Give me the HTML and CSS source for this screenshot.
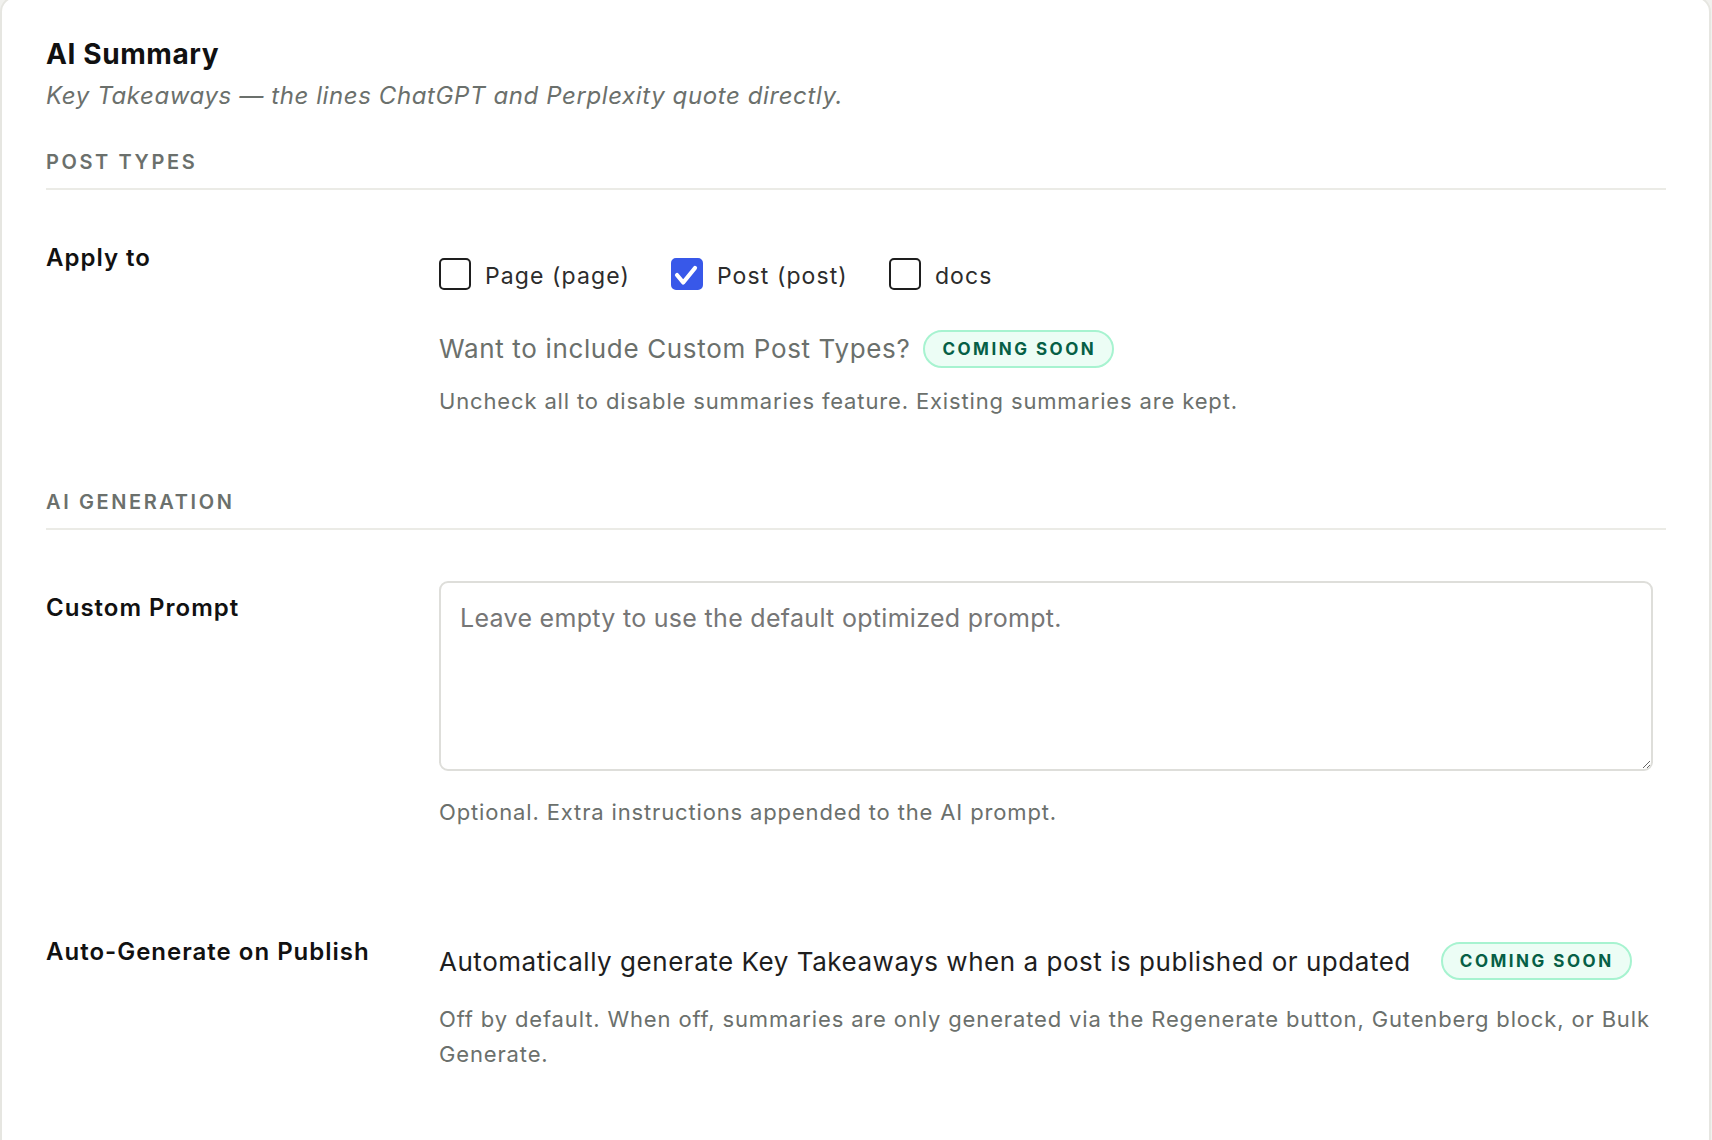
FILE: index.html
```html
<!DOCTYPE html>
<html lang="en">
<head>
<meta charset="utf-8">
<title>AI Summary</title>
<link rel="stylesheet" href="styles.css">
</head>
<body>
<div class="card">
  <h2 class="title">AI Summary</h2>
  <p class="subtitle">Key Takeaways — the lines ChatGPT and Perplexity quote directly.</p>

  <div class="section first">Post Types</div>

  <div class="row row-apply">
    <div class="label">Apply to</div>
    <div class="control">
      <div class="options">
        <label class="opt"><span class="cb"></span><span class="opt-text">Page (page)</span></label>
        <label class="opt"><span class="cb checked"><svg viewBox="0 0 32 32" width="32" height="32"><path d="M7 17 L13.2 24.5 L25 10" fill="none" stroke="#fff" stroke-width="4.2" stroke-linecap="round" stroke-linejoin="round"/></svg></span><span class="opt-text">Post (post)</span></label>
        <label class="opt"><span class="cb"></span><span class="opt-text">docs</span></label>
      </div>
      <div class="cpt">
        <span class="cpt-text">Want to include Custom Post Types?</span>
        <span class="badge">Coming soon</span>
      </div>
      <p class="hint hint-apply">Uncheck all to disable summaries feature. Existing summaries are kept.</p>
    </div>
  </div>

  <div class="section second">AI Generation</div>

  <div class="row row-prompt">
    <div class="label">Custom Prompt</div>
    <div class="control">
      <textarea class="prompt" placeholder="Leave empty to use the default optimized prompt."></textarea>
      <p class="hint hint-prompt">Optional. Extra instructions appended to the AI prompt.</p>
    </div>
  </div>

  <div class="row row-auto">
    <div class="label">Auto-Generate on Publish</div>
    <div class="control">
      <div class="auto">
        <span class="auto-text">Automatically generate Key Takeaways when a post is published or updated</span>
        <span class="badge badge-wide">Coming soon</span>
      </div>
      <p class="hint hint-auto">Off by default. When off, summaries are only generated via the Regenerate button, Gutenberg block, or Bulk Generate.</p>
    </div>
  </div>
</div>
</body>
</html>
```

FILE: styles.css
```css
* { box-sizing: border-box; }

html, body {
  margin: 0;
  padding: 0;
  height: 100%;
  overflow: hidden;
}

body {
  background: #f1f1ee;
  font-family: Inter, "Noto Sans", "Liberation Sans", sans-serif;
  color: #1e1e1e;
}

.card {
  margin: -4px 1px 0 0;
  min-height: 1220px;
  background: #ffffff;
  border: 2px solid #e6e6e1;
  border-radius: 16px;
  padding: 41px 43px 60px 44px;
}

.title {
  margin: 0;
  font-size: 28px;
  line-height: 30px;
  font-weight: 700;
  letter-spacing: 0.6px;
  color: #111111;
}

.subtitle {
  margin: 11px 0 0;
  font-size: 24px;
  line-height: 32px;
  font-style: italic;
  letter-spacing: 0.6px;
  color: #6b706c;
}

.section {
  font-size: 20px;
  line-height: 24px;
  font-weight: 600;
  letter-spacing: 2.6px;
  text-transform: uppercase;
  color: #6b706c;
  padding-bottom: 14px;
  border-bottom: 2px solid #ebebe6;
}

.section.first { margin-top: 38px; }
.section.second { margin-top: 73px; }

.row {
  display: grid;
  grid-template-columns: 393px 1fr;
  margin-top: 52px;
}

.label {
  font-size: 24px;
  line-height: 32px;
  font-weight: 600;
  letter-spacing: 1px;
  color: #111111;
}

.row-prompt { margin-top: 51px; }
.row-prompt .label { padding-top: 11px; }
.row-auto { margin-top: 108px; }
.row-auto .control { padding-top: 6px; }

.options {
  display: flex;
  gap: 41px;
  margin-top: 16px;
}

.opt {
  display: flex;
  align-items: flex-start;
  gap: 14px;
}

.cb {
  width: 32px;
  height: 32px;
  border: 2.5px solid #1e1e1e;
  border-radius: 5px;
  background: #fff;
  flex: none;
  display: block;
}

.cb.checked {
  background: #3858e9;
  border-color: #3858e9;
  position: relative;
}

.cb.checked svg {
  position: absolute;
  left: -2.5px;
  top: -2.5px;
}

.opt-text {
  font-size: 23px;
  line-height: 32px;
  padding-top: 2px;
  letter-spacing: 1.1px;
  color: #2c2c2c;
}

.cpt {
  display: flex;
  align-items: center;
  gap: 13px;
  margin-top: 38px;
}

.cpt-text {
  font-size: 26px;
  line-height: 36px;
  letter-spacing: 0.65px;
  color: #6b706c;
}

.badge {
  display: inline-flex;
  align-items: center;
  height: 38px;
  padding: 0 16px 0 17px;
  border: 2px solid #a7f3d0;
  border-radius: 19px;
  background: #ecfdf5;
  color: #065f46;
  font-size: 17px;
  font-weight: 700;
  letter-spacing: 2.5px;
  text-transform: uppercase;
}

.hint {
  margin: 0;
  font-size: 22px;
  line-height: 32px;
  letter-spacing: 0.85px;
  color: #6b706c;
}

.hint-apply { margin-top: 17px; }

.prompt {
  display: block;
  width: 1214px;
  height: 190px;
  border: 2px solid #dededa;
  border-radius: 9px;
  padding: 17px 19px;
  font-family: Inter, "Noto Sans", "Liberation Sans", sans-serif;
  font-size: 25px;
  line-height: 36px;
  letter-spacing: 0.3px;
  color: #1e1e1e;
  background: #fff;
  resize: vertical;
  outline: none;
}

.prompt::placeholder {
  color: #767676;
}

.hint-prompt { margin-top: 25px; }

.auto {
  display: flex;
  align-items: center;
  gap: 30px;
}

.auto-text {
  font-size: 26px;
  line-height: 36px;
  padding-top: 2px;
  letter-spacing: 0.53px;
  color: #1e1e1e;
}

.hint-auto {
  margin-top: 22px;
  line-height: 35px;
}
```
